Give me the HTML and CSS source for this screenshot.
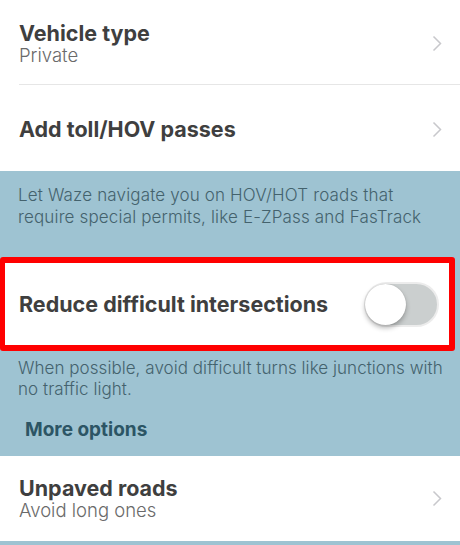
FILE: index.html
```html
<!DOCTYPE html>
<html>
<head>
<meta charset="utf-8">
<link rel="stylesheet" href="styles.css">
</head>
<body>
<div class="screen">
  <section class="card">
    <div class="row row-tall">
      <div class="text">
        <div class="title">Vehicle type</div>
        <div class="sub">Private</div>
      </div>
      <svg class="chev" width="10" height="17" viewBox="0 0 10 17"><path d="M1.5 1.5 L8.5 8.5 L1.5 15.5" fill="none" stroke="#c8c8cc" stroke-width="1.5"/></svg>
    </div>
    <div class="divider"></div>
    <div class="row row-toll">
      <div class="title">Add toll/HOV passes</div>
      <svg class="chev" width="10" height="17" viewBox="0 0 10 17"><path d="M1.5 1.5 L8.5 8.5 L1.5 15.5" fill="none" stroke="#c8c8cc" stroke-width="1.5"/></svg>
    </div>
  </section>

  <p class="note note-first">Let Waze navigate you on HOV/HOT roads that require special permits, like E-ZPass and FasTrack</p>

  <div class="highlight">
    <div class="row row-switch">
      <div class="title">Reduce difficult intersections</div>
      <div class="switch"><div class="knob"></div></div>
    </div>
  </div>

  <p class="note note-second">When possible, avoid difficult turns like junctions with no traffic light.</p>

  <div class="more">More options</div>

  <section class="card card-bottom">
    <div class="row row-unpaved">
      <div class="text">
        <div class="title">Unpaved roads</div>
        <div class="sub">Avoid long ones</div>
      </div>
      <svg class="chev" width="10" height="17" viewBox="0 0 10 17"><path d="M1.5 1.5 L8.5 8.5 L1.5 15.5" fill="none" stroke="#c8c8cc" stroke-width="1.5"/></svg>
    </div>
  </section>
</div>
</body>
</html>
```

FILE: styles.css
```css
html, body {
  margin: 0;
  padding: 0;
}
body {
  background: #9ec3d2;
  font-family: "Inter", "Liberation Sans", sans-serif;
  -webkit-font-smoothing: antialiased;
}
.screen {
  width: 460px;
  height: 545px;
  overflow: hidden;
  background: #9ec3d2;
}
.card {
  background: #ffffff;
}
.row {
  display: flex;
  align-items: center;
  justify-content: space-between;
  padding: 0 18px 0 19px;
  box-sizing: border-box;
}
.row-tall {
  height: 84px;
  padding-top: 2px;
}
.row-toll {
  height: 86px;
  padding-top: 2px;
}
.divider {
  height: 1px;
  background: #e6e6e6;
  margin-left: 19px;
}
.title {
  font-size: 21.5px;
  line-height: 24px;
  font-weight: 700;
  color: #3f3f3f;
}
.sub {
  font-size: 18.5px;
  line-height: 21px;
  font-weight: 300;
  color: #6a6a6a;
}
.chev {
  display: block;
}
.note {
  margin: 0;
  padding: 0 20px 0 18px;
  font-size: 17px;
  line-height: 22px;
  font-weight: 300;
  letter-spacing: 0.15px;
  color: #44626d;
}
.note-first {
  padding-top: 13px;
  height: 86px;
  box-sizing: border-box;
}
.highlight {
  margin-right: 5px;
  border: 6px solid #ff0000;
  border-left-width: 5px;
  border-radius: 3px;
  background: #ffffff;
}
.row-switch {
  height: 82px;
  padding: 0 10px 0 14px;
}
.switch {
  position: relative;
  width: 75px;
  height: 45px;
  box-sizing: border-box;
  border-radius: 23px;
  background: #cbcfcf;
  border: 2px solid #ececec;
}
.knob {
  position: absolute;
  left: -1px;
  top: 0px;
  width: 41px;
  height: 41px;
  border-radius: 50%;
  background: #ffffff;
  box-shadow: 0 3px 5px rgba(0,0,0,0.28), 0 0 1px rgba(0,0,0,0.2);
}
.note-second {
  padding-top: 7px;
  padding-right: 6px;
  line-height: 21px;
  letter-spacing: 0.05px;
}
.more {
  padding: 19px 0 0 25px;
  height: 56px;
  box-sizing: border-box;
  font-size: 19px;
  line-height: 22px;
  font-weight: 700;
  color: #2c5565;
}
.card-bottom {
  height: 85px;
}
.row-unpaved {
  height: 85px;
}
```
